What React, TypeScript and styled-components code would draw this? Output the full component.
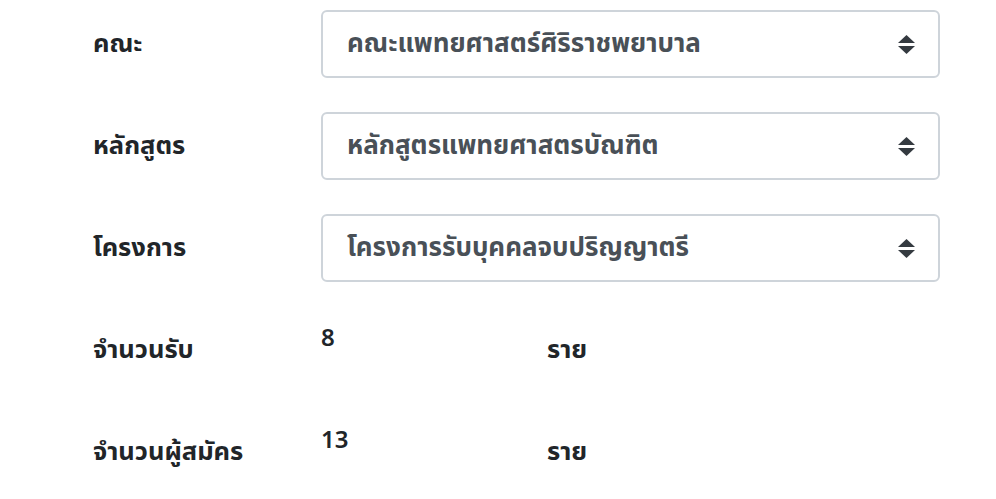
import styled, { createGlobalStyle } from "styled-components";

const GlobalStyle = createGlobalStyle`
  body {
    margin: 0;
    background: #fff;
    font-family: "Noto Sans", "Noto Sans Thai", "Liberation Sans", sans-serif;
    color: #212529;
  }
`;

const Form = styled.div`
  padding: 10px 56px 0 93px;
  display: flex;
  flex-direction: column;
  gap: 34px;
`;

const Row = styled.div`
  display: grid;
  grid-template-columns: 228px 1fr;
  align-items: center;
  height: 68px;
`;

const Label = styled.div`
  font-size: 25.5px;
  font-weight: 700;
  color: #212529;
`;

const Select = styled.div`
  height: 68px;
  box-sizing: border-box;
  border: 2px solid #ced4da;
  border-radius: 6px;
  padding: 0 23px 0 24px;
  display: flex;
  align-items: center;
  justify-content: space-between;
  font-size: 26px;
  font-weight: 700;
  color: #495057;
`;

const CountRow = styled.div`
  display: grid;
  grid-template-columns: 228px 226px 1fr;
  height: 68px;
  align-items: center;
`;

const Number = styled.div`
  font-size: 24px;
  font-weight: 600;
  color: #212529;
  align-self: start;
  padding-top: 4px;
`;

const Unit = styled.div`
  font-size: 25.5px;
  font-weight: 700;
  color: #212529;
`;

function SortIcon() {
  return (
    <svg width="17" height="19" viewBox="0 0 17 19">
      <path d="M8.5 0 L17 8 H0 Z" fill="#343a40" />
      <path d="M0 11 H17 L8.5 19 Z" fill="#343a40" />
    </svg>
  );
}

const selects = [
  { label: "คณะ", value: "คณะแพทยศาสตร์ศิริราชพยาบาล" },
  { label: "หลักสูตร", value: "หลักสูตรแพทยศาสตรบัณฑิต" },
  { label: "โครงการ", value: "โครงการรับบุคคลจบปริญญาตรี" },
];

const counts = [
  { label: "จำนวนรับ", value: "8" },
  { label: "จำนวนผู้สมัคร", value: "13" },
];

export default function App() {
  return (
    <>
      <GlobalStyle />
      <Form>
        {selects.map((s) => (
          <Row key={s.label}>
            <Label>{s.label}</Label>
            <Select>
              <span>{s.value}</span>
              <SortIcon />
            </Select>
          </Row>
        ))}
        {counts.map((c) => (
          <CountRow key={c.label}>
            <Label>{c.label}</Label>
            <Number>{c.value}</Number>
            <Unit>ราย</Unit>
          </CountRow>
        ))}
      </Form>
    </>
  );
}
